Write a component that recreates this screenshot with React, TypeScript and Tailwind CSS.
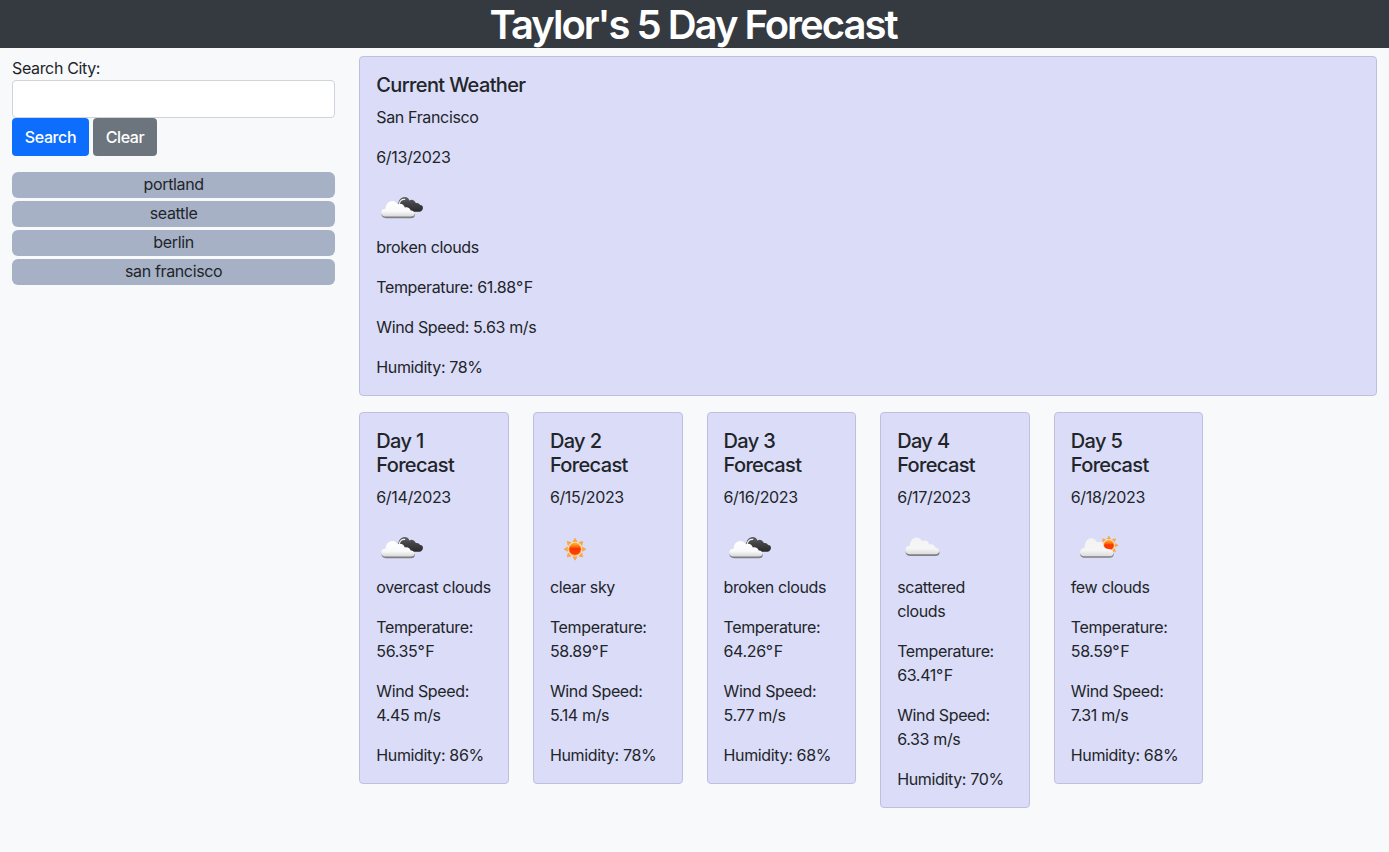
type IconKind = "broken" | "sun" | "cloud" | "few";

const CLOUD = "M9.5 32C5.5 32 4.4 29.5 5.2 27.3C6 25.4 7.8 24.9 9.3 25.1C9.4 21.4 12 18.3 15.9 18.2C18.4 18.1 20.2 19.4 21.3 21.1C24.3 19.8 27.8 21 28.5 24C31.7 23.4 33.8 24.8 34.4 26.6C36.8 26.4 38.4 28.1 38.1 29.8C37.8 31.4 36.4 32 34.5 32Z";
const FEW_CLOUD = "M14 31.3C10 31.3 8.8 28.6 9.6 26C10.2 23.8 12 22.8 14 22.9C14 17.5 16.5 13.3 20.5 13.2C23.3 13.1 25.6 15 26.6 17.4C29.8 15.9 32.4 17.3 32.9 20.4C33.4 22.6 35.4 23.9 38.2 23.9C41.6 24.2 43 26.3 42.8 28.4C42.5 30.5 41 31.3 39 31.3Z";
const SPIKES = [0, 45, 90, 135, 180, 225, 270, 315];

const CLOUD_TRANSFORM: Record<IconKind, string> = {
  broken: "translate(0.3 -4.6) scale(1 1.13)",
  cloud: "translate(3.3 -9.5) scale(1.02 1.21)",
  few: "translate(-0.4 0)",
  sun: "",
};

function Sun({ cx, cy, scale }: { cx: number; cy: number; scale: number }) {
  return (
    <g transform={`translate(${cx} ${cy}) scale(${scale})`}>
      {SPIKES.map((a) => (
        <path key={a} d="M-2.1 -7.5L0 -11L2.1 -7.5Z" fill="#ffa940" stroke="#ff9526" strokeWidth="0.5" transform={`rotate(${a})`} />
      ))}
      <circle r="7.1" fill="#ffe9c4" />
      <circle r="6.1" fill="url(#sunFill)" stroke="#ffa31c" strokeWidth="0.8" />
    </g>
  );
}

function WeatherIcon({ kind }: { kind: IconKind }) {
  const outline = kind === "few" ? FEW_CLOUD : CLOUD;
  return (
    <svg className="block h-[50px] w-[50px]" viewBox="0 0 50 50">
      <defs>
        <linearGradient id="cloudFill" x1="0" y1="0" x2="0" y2="1">
          <stop offset="0" stopColor="#ffffff" />
          <stop offset="0.65" stopColor="#fafafa" />
          <stop offset="1" stopColor="#d8d8d8" />
        </linearGradient>
        <linearGradient id="greyFill" x1="0" y1="0" x2="0" y2="1">
          <stop offset="0" stopColor="#f3f3f3" />
          <stop offset="0.65" stopColor="#f6f6f6" />
          <stop offset="1" stopColor="#dcdcdc" />
        </linearGradient>
        <linearGradient id="darkFill" x1="0" y1="0" x2="0" y2="1">
          <stop offset="0" stopColor="#626266" />
          <stop offset="0.4" stopColor="#454547" />
          <stop offset="1" stopColor="#2b2b2d" />
        </linearGradient>
        <linearGradient id="sunFill" x1="0" y1="0" x2="0" y2="1">
          <stop offset="0" stopColor="#ffb52e" />
          <stop offset="0.3" stopColor="#fb7010" />
          <stop offset="0.45" stopColor="#fa3505" />
          <stop offset="1" stopColor="#f8430b" />
        </linearGradient>
      </defs>
      {kind === "sun" && <Sun cx={25} cy={24.2} scale={1} />}
      {kind === "few" && <Sun cx={37.9} cy={20.3} scale={0.84} />}
      {kind === "broken" && (
        <g>
          <path d="M22.2 20C22.3 15.5 24.8 12.3 28.6 12.1C31 12 32.8 13.6 33.4 15.4C36 13.9 38.8 15.3 39.8 18C42.2 17.5 43.7 18.8 44.2 20.1C46.5 20.1 47.4 22 46.8 23.9C46.1 26 44.3 26.7 42.3 26.7H28Z" fill="url(#darkFill)" />
          <path d="M23.2 19C23.8 15.8 26 13.8 29.2 14.4" fill="none" stroke="#efeff4" strokeWidth="1.2" />
        </g>
      )}
      {kind !== "sun" && (
        <g transform={CLOUD_TRANSFORM[kind]}>
          <path d={outline} fill="#808084" transform="translate(0.3 1.4)" />
          <path d={outline} fill={kind === "broken" ? "url(#cloudFill)" : "url(#greyFill)"} />
        </g>
      )}
    </svg>
  );
}

interface Forecast {
  title: string;
  date: string;
  city?: string;
  icon: IconKind;
  description: string;
  temperature: string;
  wind: string;
  humidity: string;
}

const current: Forecast = { title: "Current Weather", city: "San Francisco", date: "6/13/2023", icon: "broken", description: "broken clouds", temperature: "61.88", wind: "5.63", humidity: "78" };

const days: Forecast[] = [
  { title: "Day 1 Forecast", date: "6/14/2023", icon: "broken", description: "overcast clouds", temperature: "56.35", wind: "4.45", humidity: "86" },
  { title: "Day 2 Forecast", date: "6/15/2023", icon: "sun", description: "clear sky", temperature: "58.89", wind: "5.14", humidity: "78" },
  { title: "Day 3 Forecast", date: "6/16/2023", icon: "broken", description: "broken clouds", temperature: "64.26", wind: "5.77", humidity: "68" },
  { title: "Day 4 Forecast", date: "6/17/2023", icon: "cloud", description: "scattered clouds", temperature: "63.41", wind: "6.33", humidity: "70" },
  { title: "Day 5 Forecast", date: "6/18/2023", icon: "few", description: "few clouds", temperature: "58.59", wind: "7.31", humidity: "68" },
];

function WeatherCard({ data }: { data: Forecast }) {
  return (
    <article className="rounded border border-[#bfc0df] bg-[#dbdcf7] p-4">
      <h5 className="mb-2 text-xl leading-6 font-medium tracking-[-0.63px]">{data.title}</h5>
      {data.city && <p className="mb-4">{data.city}</p>}
      <p className="mb-4">{data.date}</p>
      <WeatherIcon kind={data.icon} />
      <p className="mb-4">{data.description}</p>
      <p className="mb-4">Temperature: {data.temperature}<span className="tracking-[0.6px]">°</span>F</p>
      <p className="mb-4">Wind Speed: {data.wind} m/s</p>
      <p>Humidity: {data.humidity}%</p>
    </article>
  );
}

export default function App() {
  return (
    <div className="min-h-screen bg-[#f8f9fb] font-['Inter',sans-serif] text-base leading-6 tracking-[-0.35px] text-[#212529]">
      <header className="h-12 bg-[#343a40] text-center">
        <h1 className="pr-[3px] text-[40px] leading-[50px] font-semibold tracking-[-2px] text-white">Taylor's 5 Day Forecast</h1>
      </header>
      <div className="flex">
        <aside className="w-1/4 px-3 pt-2">
          <label htmlFor="city" className="block">Search City:</label>
          <input id="city" className="block h-[38px] w-full rounded border border-[#ced4da] bg-white px-3" />
          <div className="flex gap-1">
            <button className="h-[38px] w-[77px] rounded bg-[#0d6efd] font-medium tracking-[-0.4px] text-white">Search</button>
            <button className="h-[38px] w-16 rounded bg-[#6c757d] font-medium tracking-[-0.4px] text-white">Clear</button>
          </div>
          <ul className="mt-4 flex flex-col gap-[3px] text-center">
            {["portland", "seattle", "berlin", "san francisco"].map((city) => (
              <li key={city} className="h-[26px] rounded-md bg-[#a6b1c6]">{city}</li>
            ))}
          </ul>
        </aside>
        <main className="w-3/4 pt-2">
          <section className="px-3">
            <WeatherCard data={current} />
          </section>
          <section className="mt-4 flex items-start">
            {days.map((day) => (
              <div key={day.date} className="w-1/6 px-3">
                <WeatherCard data={day} />
              </div>
            ))}
          </section>
        </main>
      </div>
    </div>
  );
}
